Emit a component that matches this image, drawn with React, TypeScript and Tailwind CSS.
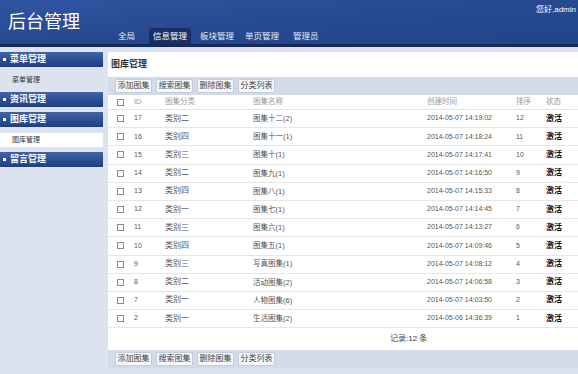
const font = { fontFamily: '"Liberation Sans", "Noto Sans CJK SC", sans-serif' };

const navs = [
  { label: '全局', cls: 'ml-0' },
  { label: '信息管理', cls: 'ml-[9px]', active: true },
  { label: '板块管理', cls: 'ml-[4px]' },
  { label: '单页管理', cls: 'ml-[1px]' },
  { label: '管理员', cls: 'ml-[4px]' },
];

const menus = [
  { title: '菜单管理', sub: '菜单管理', active: false },
  { title: '资讯管理' },
  { title: '图库管理', sub: '图库管理', active: true },
  { title: '留言管理' },
];

const rows = [
  ['17', '类别二', '图集十二(2)', '2014-05-07 14:19:02', '12'],
  ['16', '类别四', '图集十一(1)', '2014-05-07 14:18:24', '11'],
  ['15', '类别三', '图集十(1)', '2014-05-07 14:17:41', '10'],
  ['14', '类别二', '图集九(1)', '2014-05-07 14:16:50', '9'],
  ['13', '类别四', '图集八(1)', '2014-05-07 14:15:33', '8'],
  ['12', '类别一', '图集七(1)', '2014-05-07 14:14:45', '7'],
  ['11', '类别三', '图集六(1)', '2014-05-07 14:13:27', '6'],
  ['10', '类别四', '图集五(1)', '2014-05-07 14:09:46', '5'],
  ['9', '类别三', '写真图集(1)', '2014-05-07 14:08:12', '4'],
  ['8', '类别二', '活动图集(2)', '2014-05-07 14:06:58', '3'],
  ['7', '类别一', '人物图集(6)', '2014-05-07 14:03:50', '2'],
  ['2', '类别一', '生活图集(2)', '2014-05-06 14:36:39', '1'],
];

const cols = 'grid grid-cols-[22px_31px_88px_174px_89px_30px_1fr] items-center';

function Box() {
  return <span className="block h-[7px] w-[7px] border border-[#8c8c8c] bg-white" />;
}

function Toolbar() {
  return (
    <div className="flex h-[18px] items-center gap-[4px] bg-[#d3dbe8] pl-[7px]">
      {['添加图集', '搜索图集', '删除图集', '分类列表'].map((b) => (
        <span
          key={b}
          className="flex h-[14px] w-[37px] items-center justify-center rounded-[2px] border border-[#c3ccd9] bg-[#f5f7fa] text-[8px] text-[#444]"
        >
          {b}
        </span>
      ))}
    </div>
  );
}

export default function App() {
  return (
    <div className="h-[374px] w-[578px] overflow-hidden bg-[#dce3ee]" style={font}>
      {/* header */}
      <div className="relative h-[47px] border-b-[3px] border-[#15295a] bg-gradient-to-br from-[#2f56a2] via-[#27498f] to-[#22448a]">
        <div className="absolute left-[8px] top-[13px] text-[18px] leading-none text-white">后台管理</div>
        <div className="absolute right-[2px] top-[4px] whitespace-nowrap text-[8px] text-white">您好,admin</div>
        <div className="flex h-full items-end pl-[113px]">
          {navs.map((n) => (
            <span
              key={n.label}
              className={
                n.active
                  ? `${n.cls} flex h-[16px] items-center rounded-t-[3px] bg-[#1a3064] px-[4px] text-[8.5px] text-white`
                  : `${n.cls} flex h-[16px] items-center px-[5px] text-[8.5px] text-[#e6ecf7]`
              }
            >
              {n.label}
            </span>
          ))}
        </div>
      </div>

      <div className="flex pt-[5px]">
        {/* sidebar */}
        <div className="flex w-[103px] flex-col">
          {menus.map((m) => (
            <div key={m.title} className="mb-[5px]">
              <div className="flex h-[15px] items-center bg-gradient-to-b from-[#4063a8] to-[#1f3e82] pl-[3px] text-[9px] font-bold text-white">
                <span className="mr-[4px] h-[3px] w-[3px] bg-white" />
                {m.title}
              </div>
              {m.sub && (
                <div
                  className={
                    m.active
                      ? 'mt-[6px] flex h-[14px] items-center bg-white pl-[12px] text-[7px] text-[#333]'
                      : 'mt-[6px] flex h-[14px] items-center pl-[12px] text-[7px] text-[#333]'
                  }
                >
                  {m.sub}
                </div>
              )}
            </div>
          ))}
        </div>

        {/* main panel */}
        <div className="ml-[5px] flex-1 bg-white">
          <div className="flex h-[25px] items-center pl-[3px] text-[9px] font-bold text-[#333]">图库管理</div>
          <Toolbar />
          <div className={`${cols} h-[15px] border-b border-[#e3e3e3] text-[7.5px] text-[#999]`}>
            <span className="pl-[9px]">
              <Box />
            </span>
            <span className="pl-[4px]">ID</span>
            <span className="pl-[4px]">图集分类</span>
            <span className="pl-[4px]">图集名称</span>
            <span className="pl-[4px]">创建时间</span>
            <span className="pl-[4px]">排序</span>
            <span className="pl-[4px]">状态</span>
          </div>
          {rows.map((r) => (
            <div key={r[0]} className={`${cols} h-[18.2px] border-b border-[#e6e6e6] text-[#555]`}>
              <span className="pl-[9px]">
                <Box />
              </span>
              <span className="pl-[4px] text-[7px]">{r[0]}</span>
              <span className="pl-[4px] text-[8px]">{r[1]}</span>
              <span className="pl-[4px] text-[7.5px]">{r[2]}</span>
              <span className="pl-[4px] text-[7px]">{r[3]}</span>
              <span className="pl-[4px] text-[7px]">{r[4]}</span>
              <span className="pl-[4px] text-[8px] font-bold text-[#111]">激活</span>
            </div>
          ))}
          <div className="flex h-[22px] items-center pl-[282px] text-[8px] text-[#444]">记录:12 条</div>
          <Toolbar />
        </div>
      </div>
    </div>
  );
}
